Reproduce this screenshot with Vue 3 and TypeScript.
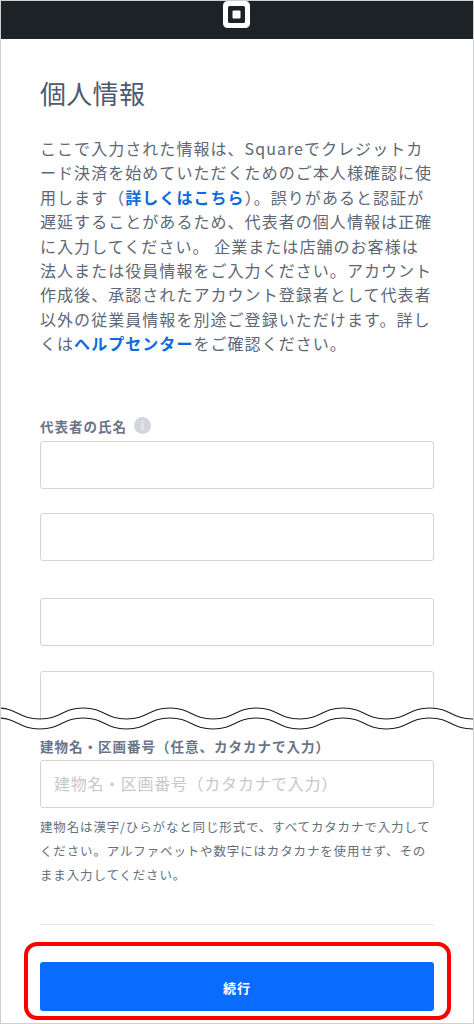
<script setup lang="ts">
const lines: { t: string; link?: boolean }[][] = [
  [{ t: 'ここで入力された情報は、Squareでクレジットカ' }],
  [{ t: 'ード決済を始めていただくためのご本人様確認に使' }],
  [{ t: '用します（' }, { t: '詳しくはこちら', link: true }, { t: '）。誤りがあると認証が' }],
  [{ t: '遅延することがあるため、代表者の個人情報は正確' }],
  [{ t: 'に入力してください。 企業または店舗のお客様は' }],
  [{ t: '法人または役員情報をご入力ください。アカウント' }],
  [{ t: '作成後、承認されたアカウント登録者として代表者' }],
  [{ t: '以外の従業員情報を別途ご登録いただけます。詳し' }],
  [{ t: 'くは' }, { t: 'ヘルプセンター', link: true }, { t: 'をご確認ください。' }],
]
const wave = (y: number) => {
  let d = `M-90 ${y}`
  for (let x = -90; x < 520; x += 86.6) {
    d += ` C${x + 21.6} ${y} ${x + 21.6} ${y + 11} ${x + 43.3} ${y + 11} S${x + 65} ${y} ${x + 86.6} ${y}`
  }
  return d
}
const topWave = wave(708)
const bottomWave = wave(718)
const fill = `${topWave} L520 736 L-90 736 Z`
</script>

<template>
  <div class="page">
    <header class="bar">
      <svg class="logo" viewBox="0 0 27 27" width="27" height="27" aria-hidden="true">
        <path fill-rule="evenodd" fill="#fff" d="M4.5 0h18A4.500 4.500 0 0 1 27 4.500v18a4.500 4.500 0 0 1-4.500 4.500h-18A4.500 4.500 0 0 1 0 22.500v-18A4.500 4.500 0 0 1 4.500 0zM6.500 5A1.500 1.500 0 0 0 5 6.500v14A1.500 1.500 0 0 0 6.500 22h14a1.500 1.500 0 0 0 1.500-1.500v-14A1.500 1.500 0 0 0 20.500 5z" />
        <rect x="9.500" y="9.500" width="8" height="8" rx="1" fill="#fff" />
      </svg>
    </header>

    <main class="content">
      <h1 class="title">個人情報</h1>
      <p class="intro">
        <span v-for="(line, i) in lines" :key="i" class="line">
          <template v-for="(part, j) in line" :key="j">
            <a v-if="part.link" class="link">{{ part.t }}</a>
            <template v-else>{{ part.t }}</template>
          </template>
        </span>
      </p>

      <div class="label-row">
        <span class="label">代表者の氏名</span>
        <span class="info">i</span>
      </div>
      <div class="box first"></div>
      <div class="box second"></div>
      <div class="box third"></div>
      <div class="box fourth"></div>

      <div class="label building">建物名・区画番号（任意、カタカナで入力）</div>
      <div class="box placeholder">建物名・区画番号（カタカナで入力）</div>
      <p class="hint">
        <span class="line">建物名は漢字/ひらがなと同じ形式で、すべてカタカナで入力して</span>
        <span class="line">ください。アルファベットや数字にはカタカナを使用せず、その</span>
        <span class="line">まま入力してください。</span>
      </p>
      <hr class="rule" />
      <button class="continue" type="button">続行</button>
    </main>

    <svg class="wave" viewBox="0 0 474 1024" width="474" height="1024" aria-hidden="true">
      <path :d="fill" fill="#fff" />
      <path :d="topWave" fill="none" stroke="#1c1c1c" stroke-width="1.1" />
      <path :d="bottomWave" fill="none" stroke="#1c1c1c" stroke-width="1.1" />
    </svg>
    <div class="callout"></div>
  </div>
</template>

<style scoped>
.page {
  position: relative;
  box-sizing: border-box;
  width: 474px;
  height: 1024px;
  overflow: hidden;
  background: #fff;
  border: 1px solid #cfcfcf;
  font-family: "Noto Sans CJK JP", "Noto Sans", sans-serif;
}
.bar {
  height: 38px;
  background: #1d2227;
  display: flex;
  justify-content: center;
  align-items: flex-start;
}
.logo {
  display: block;
  margin-left: -2px;
}
.content {
  padding: 0 39px;
  display: flex;
  flex-direction: column;
}
.title {
  margin: 36px 0 0;
  font-size: 26px;
  line-height: 36px;
  font-weight: 400;
  color: #4d5a70;
  letter-spacing: 0.3px;
}
.intro {
  margin: 25px 0 0;
  font-size: 16px;
  line-height: 24.4px;
  letter-spacing: 1.05px;
  color: #5d6775;
  white-space: nowrap;
}
.line {
  display: block;
}
.link {
  color: #0f6bdc;
  font-weight: 700;
}
.label-row {
  margin-top: 60px;
  display: flex;
  align-items: center;
  gap: 7px;
  height: 20px;
}
.label {
  font-size: 13.500px;
  line-height: 20px;
  font-weight: 700;
  letter-spacing: 1px;
  color: #6a7488;
}
.info {
  width: 17px;
  height: 17px;
  border-radius: 50%;
  background: #d3d6da;
  color: #eceef0;
  font-size: 11px;
  line-height: 17px;
  font-weight: 700;
  text-align: center;
}
.box {
  box-sizing: border-box;
  width: 394px;
  height: 48px;
  background: #fff;
  border: 1.500px solid #d4d4d4;
  border-radius: 3px;
}
.first {
  margin-top: 5px;
}
.second {
  margin-top: 24px;
}
.third {
  margin-top: 37px;
}
.fourth {
  margin-top: 25px;
  height: 60px;
}
.building {
  margin-top: 5px;
  height: 21px;
  position: relative;
  z-index: 2;
}
.placeholder {
  margin-top: 3px;
  padding-left: 13px;
  font-size: 16px;
  line-height: 45px;
  letter-spacing: 0.7px;
  color: #c6c8cc;
  white-space: nowrap;
}
.hint {
  margin: 7px 0 0;
  font-size: 12.500px;
  line-height: 24px;
  letter-spacing: 0.85px;
  color: #656f7d;
  white-space: nowrap;
}
.rule {
  width: 394px;
  margin: 37px 0 0;
  border: 0;
  border-top: 1px solid #e4e4e4;
}
.continue {
  width: 394px;
  height: 49px;
  margin-top: 37px;
  border: 0;
  border-radius: 3px;
  background: #0a6cff;
  color: #fff;
  font: 700 13px/49px "Noto Sans CJK JP", sans-serif;
  letter-spacing: 1px;
}
.wave {
  position: absolute;
  left: -1px;
  top: -1px;
  z-index: 1;
  pointer-events: none;
}
.callout {
  position: absolute;
  left: 23px;
  top: 941px;
  width: 427px;
  height: 78px;
  box-sizing: border-box;
  border: 4.500px solid #fc0000;
  border-radius: 13px;
}
</style>
